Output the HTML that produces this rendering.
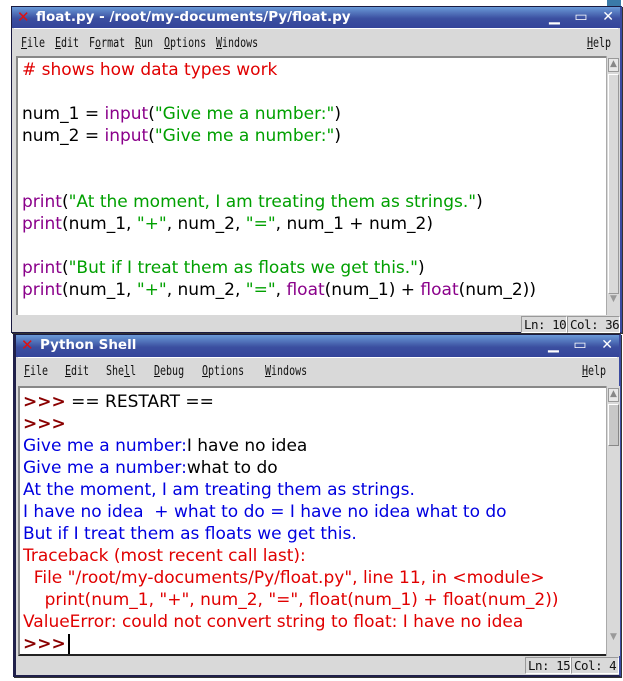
<!DOCTYPE html>
<html><head><meta charset="utf-8"><style>
*{margin:0;padding:0;box-sizing:border-box}
body{width:623px;height:681px;background:#fff;position:relative;overflow:hidden;font-family:"DejaVu Sans","Liberation Sans",sans-serif}
.abs{position:absolute}
.win{position:absolute;background:#d9d9d9;border:1px solid #1a1a40;box-shadow:1px 1px 0 #333}
.title{position:absolute;left:0;right:0;top:0;background:linear-gradient(#6a9ad8,#3b4fa0 55%,#34449a);color:#fff;font-weight:bold;font-size:13.5px;line-height:20px}
.title .t{position:absolute;left:24px;top:0}
.xlogo{position:absolute;left:5px;top:3px;color:#e01010;font-weight:bold;font-size:15px;line-height:14px}
.btns{position:absolute;right:6px;top:0;font-size:14px;font-weight:bold}
.menu{position:absolute;left:2px;right:2px;background:#d9d9d9;border-top:1px solid #fff;font-family:"DejaVu Sans Mono","Liberation Mono",monospace;font-size:13.5px;color:#111}
.menu span{position:absolute;top:0;transform:scaleX(.74);transform-origin:left;white-space:nowrap}
.txt{position:absolute;background:#fff;border-top:2px solid #888;border-left:2px solid #888;font-size:17px;line-height:22px;white-space:pre;overflow:hidden}
.sb{position:absolute;background:#d9d9d9;border-left:1px solid #aaa}
.stat{position:absolute;font-family:"DejaVu Sans Mono","Liberation Mono",monospace;font-size:12.5px;border:1px solid #999;border-right-color:#fff;border-bottom-color:#fff;padding:0 2px;line-height:15px;color:#111;letter-spacing:-.5px;white-space:nowrap}
.r{color:#e00000}.g{color:#00a000}.p{color:#8a008a}.b{color:#0000e0}.k{color:#000}.dr{color:#8a0000;font-weight:bold}
u{text-decoration:underline}
</style></head><body>
<div class="abs" style="left:607px;top:0;width:14px;height:7px;background:#3a7aa8"></div>

<!-- Window 1 -->
<div class="win" style="left:11px;top:6px;width:611px;height:327px;border-right:2px solid #3a4aa0">
 <div class="title" style="height:21px"><span class="xlogo">✕</span><span class="t">float.py - /root/my-documents/Py/float.py</span><span class="btns">▁&nbsp;&nbsp;&nbsp;▭&nbsp;&nbsp;&nbsp;✕</span></div>
 <div class="menu" style="top:21px;height:28px;line-height:28px">
  <span style="left:7px"><u>F</u>ile</span><span style="left:41px"><u>E</u>dit</span><span style="left:75px">F<u>o</u>rmat</span><span style="left:121px"><u>R</u>un</span><span style="left:150px"><u>O</u>ptions</span><span style="left:202px"><u>W</u>indows</span><span style="left:573px"><u>H</u>elp</span>
 </div>
 <div class="txt" style="left:4px;top:49px;width:591px;height:259px;padding:1px 0 0 4px"><span class="r"># shows how data types work</span>

<span class="k">num_1 = </span><span class="p">input</span>(<span class="g">"Give me a number:"</span>)
<span class="k">num_2 = </span><span class="p">input</span>(<span class="g">"Give me a number:"</span>)


<span class="p">print</span>(<span class="g">"At the moment, I am treating them as strings."</span>)
<span class="p">print</span>(num_1, <span class="g">"+"</span>, num_2, <span class="g">"="</span>, num_1 + num_2)

<span class="p">print</span>(<span class="g">"But if I treat them as floats we get this."</span>)
<span class="p">print</span>(num_1, <span class="g">"+"</span>, num_2, <span class="g">"="</span>, <span class="p">float</span>(num_1) + <span class="p">float</span>(num_2))</div>
 <div class="sb" style="left:594px;top:49px;width:14px;height:259px"><div style="margin:2px 1px;height:14px;background:#e8e8e8;border:1px solid #999;font-size:9px;text-align:center;color:#888">▲</div><div style="margin:0 1px;height:220px;border:1px solid #fff;border-right-color:#999;border-bottom-color:#999"></div><div style="font-size:9px;text-align:center;color:#999">▼</div></div>
 <div class="stat" style="left:509px;top:309px;width:46px">Ln: 10</div>
 <div class="stat" style="left:555px;top:309px;width:53px">Col: 36</div>
</div>

<!-- Window 2 -->
<div class="win" style="left:13px;top:334px;width:608px;height:343px;border-left:3px solid #20204a;border-right:2px solid #3a4aa0;border-bottom:2px solid #20204a">
 <div class="title" style="height:22px"><span class="xlogo">✕</span><span class="t">Python Shell</span><span class="btns">▁&nbsp;&nbsp;&nbsp;▭&nbsp;&nbsp;&nbsp;✕</span></div>
 <div class="menu" style="top:22px;height:29px;line-height:27px">
  <span style="left:6px"><u>F</u>ile</span><span style="left:47px"><u>E</u>dit</span><span style="left:88px">She<u>l</u>l</span><span style="left:136px"><u>D</u>ebug</span><span style="left:184px"><u>O</u>ptions</span><span style="left:247px"><u>W</u>indows</span><span style="left:564px"><u>H</u>elp</span>
 </div>
 <div class="txt" style="left:2px;top:51px;width:588px;height:270px;padding:3px 0 0 3px;border-bottom:2px solid #222"><span class="dr">&gt;&gt;&gt;</span> == RESTART ==
<span class="dr">&gt;&gt;&gt;</span>
<span class="b">Give me a number:</span>I have no idea
<span class="b">Give me a number:</span>what to do
<span class="b">At the moment, I am treating them as strings.</span>
<span class="b">I have no idea  + what to do = I have no idea what to do</span>
<span class="b">But if I treat them as floats we get this.</span>
<span class="r">Traceback (most recent call last):
  File "/root/my-documents/Py/float.py", line 11, in &lt;module&gt;
    print(num_1, "+", num_2, "=", float(num_1) + float(num_2))
ValueError: could not convert string to float: I have no idea</span>
<span class="dr">&gt;&gt;&gt;</span><span style="border-left:2px solid #000;margin-left:2px"> </span></div>
 <div class="sb" style="left:590px;top:51px;width:14px;height:270px"><div style="margin:2px 1px;height:14px;background:#e8e8e8;border:1px solid #999;font-size:9px;text-align:center;color:#888">▲</div><div style="margin:0 1px;height:42px;background:#c8c8c8;border:1px solid #fff;border-right-color:#888;border-bottom-color:#888"></div><div style="height:186px"></div><div style="font-size:9px;text-align:center;color:#999">▼</div></div>
 <div class="stat" style="left:509px;top:322px;width:46px">Ln: 15</div>
 <div class="stat" style="left:555px;top:322px;width:48px">Col: 4</div>
</div>
</body></html>
